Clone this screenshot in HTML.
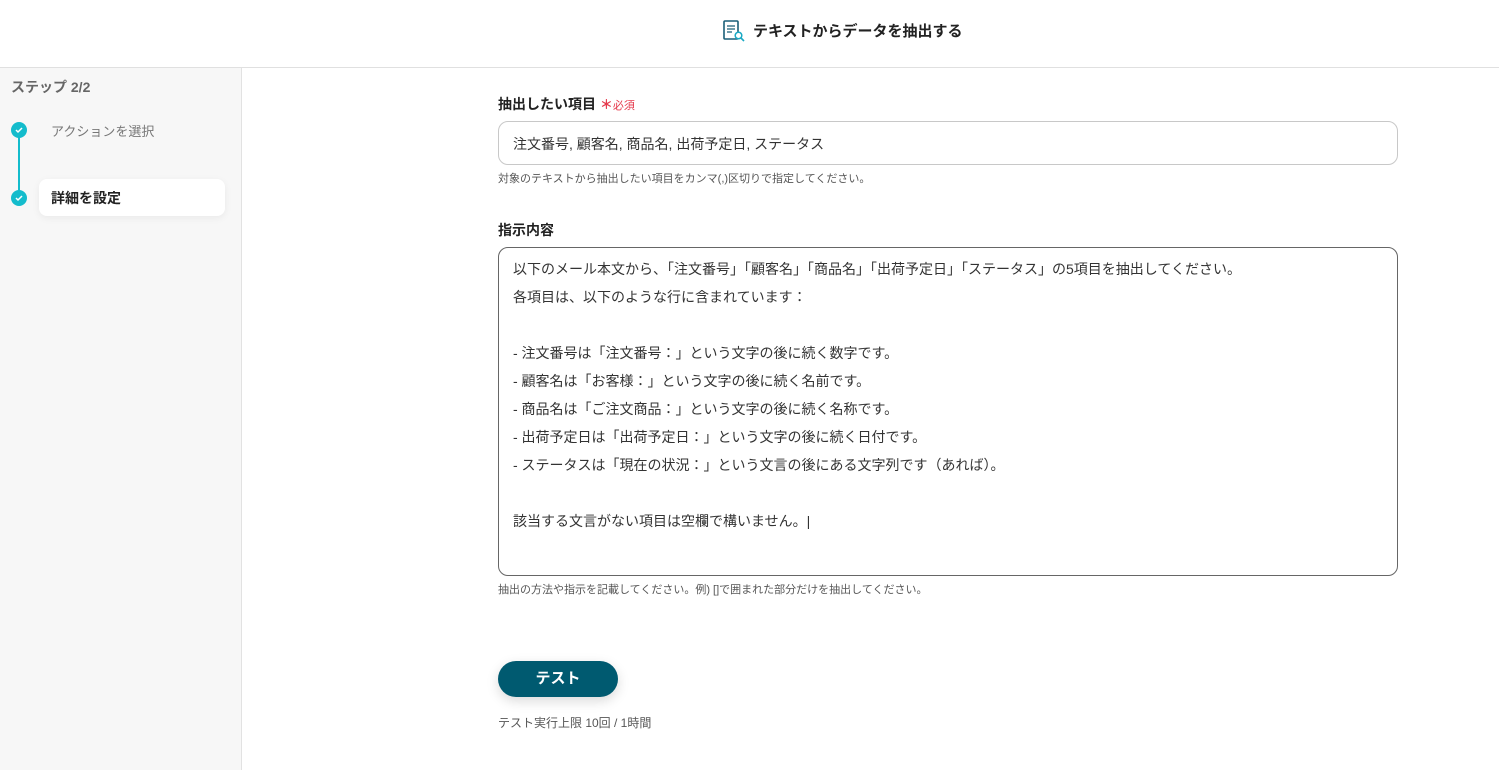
<!DOCTYPE html>
<html><head><meta charset="utf-8"><style>
*{box-sizing:border-box;margin:0;padding:0}
body{width:1499px;height:770px;overflow:hidden;background:#fff;font-family:"Liberation Sans","Noto Sans CJK JP",sans-serif;color:#333;position:relative}
.hdr{position:absolute;left:0;top:0;width:1499px;height:68px;border-bottom:1px solid #e0e0e0;background:#fff}
.title{position:absolute;left:753px;top:20px;font-size:15px;font-weight:bold;color:#222}
.side{position:absolute;left:0;top:68px;width:242px;height:702px;background:#f7f7f7;border-right:1px solid #e2e2e2}
.abs{position:absolute}
.dot{position:absolute;width:16px;height:16px;border-radius:50%;background:#14bccc}
.lbl{font-size:14px;font-weight:bold;color:#222}
.box{position:absolute;left:498px;border:1px solid #c8c8c8;border-radius:10px;font-size:14px;color:#333}
.help{position:absolute;left:498px;font-size:11px;color:#555}
.ta div{height:28px;line-height:28px}
</style></head><body>
<div class="hdr">
<svg class="abs" style="left:723px;top:20px" width="22" height="22" viewBox="0 0 22 22"><rect x="1" y="1" width="14" height="18" fill="none" stroke="#1a5f78" stroke-width="1.6" rx="1"/><path d="M4 6h8M4 9h8M4 12h5" stroke="#1a5f78" stroke-width="1.3"/><circle cx="15.5" cy="15.5" r="3.3" fill="#fff" stroke="#1aa9c4" stroke-width="1.5"/><path d="M18 18l3 3" stroke="#1aa9c4" stroke-width="1.6"/></svg>
<div class="title">テキストからデータを抽出する</div>
</div>
<div class="side">
<div class="abs" style="left:11px;top:9px;font-size:14px;font-weight:bold;color:#666">ステップ 2/2</div>
<div class="abs" style="left:18px;top:62px;width:2px;height:68px;background:#14bccc"></div>
<div class="dot" style="left:11px;top:54px"></div>
<div class="dot" style="left:11px;top:122px"></div>
<svg class="abs" style="left:11px;top:54px" width="16" height="16"><path d="M5 8l2 2 4-4" stroke="#fff" stroke-width="1.5" fill="none"/></svg>
<svg class="abs" style="left:11px;top:122px" width="16" height="16"><path d="M5 8l2 2 4-4" stroke="#fff" stroke-width="1.5" fill="none"/></svg>
<div class="abs" style="left:51px;top:53px;font-size:13px;color:#777">アクションを選択</div>
<div class="abs" style="left:39px;top:111px;width:186px;height:37px;background:#fff;border-radius:8px;box-shadow:0 2px 8px rgba(0,0,0,.06)"></div>
<div class="abs" style="left:51px;top:120px;font-size:14px;font-weight:bold;color:#222">詳細を設定</div>
</div>
<div class="abs lbl" style="left:498px;top:94px">抽出したい項目 <span style="color:#e5394c;font-size:13px">＊</span><span style="color:#e5394c;font-size:11px;font-weight:normal">必須</span></div>
<div class="box" style="top:121px;width:900px;height:44px;padding:12px 14px">注文番号, 顧客名, 商品名, 出荷予定日, ステータス</div>
<div class="help" style="top:170px">対象のテキストから抽出したい項目をカンマ(,)区切りで指定してください。</div>
<div class="abs lbl" style="left:498px;top:220px">指示内容</div>
<div class="box ta" style="top:247px;width:900px;height:329px;padding:7px 14px;border-color:#666">
<div>以下のメール本文から、「注文番号」「顧客名」「商品名」「出荷予定日」「ステータス」の5項目を抽出してください。</div>
<div>各項目は、以下のような行に含まれています：</div><div></div>
<div>- 注文番号は「注文番号：」という文字の後に続く数字です。</div>
<div>- 顧客名は「お客様：」という文字の後に続く名前です。</div>
<div>- 商品名は「ご注文商品：」という文字の後に続く名称です。</div>
<div>- 出荷予定日は「出荷予定日：」という文字の後に続く日付です。</div>
<div>- ステータスは「現在の状況：」という文言の後にある文字列です（あれば）。</div><div></div>
<div>該当する文言がない項目は空欄で構いません。|</div>
</div>
<div class="help" style="top:581px">抽出の方法や指示を記載してください。例) []で囲まれた部分だけを抽出してください。</div>
<div class="abs" style="left:498px;top:661px;width:120px;height:36px;border-radius:18px;background:#005a70;color:#fff;font-size:15px;font-weight:bold;text-align:center;line-height:36px;box-shadow:0 4px 12px rgba(0,0,0,.15)">テスト</div>
<div class="help" style="top:714px;font-size:12px">テスト実行上限 10回 / 1時間</div>
</body></html>
